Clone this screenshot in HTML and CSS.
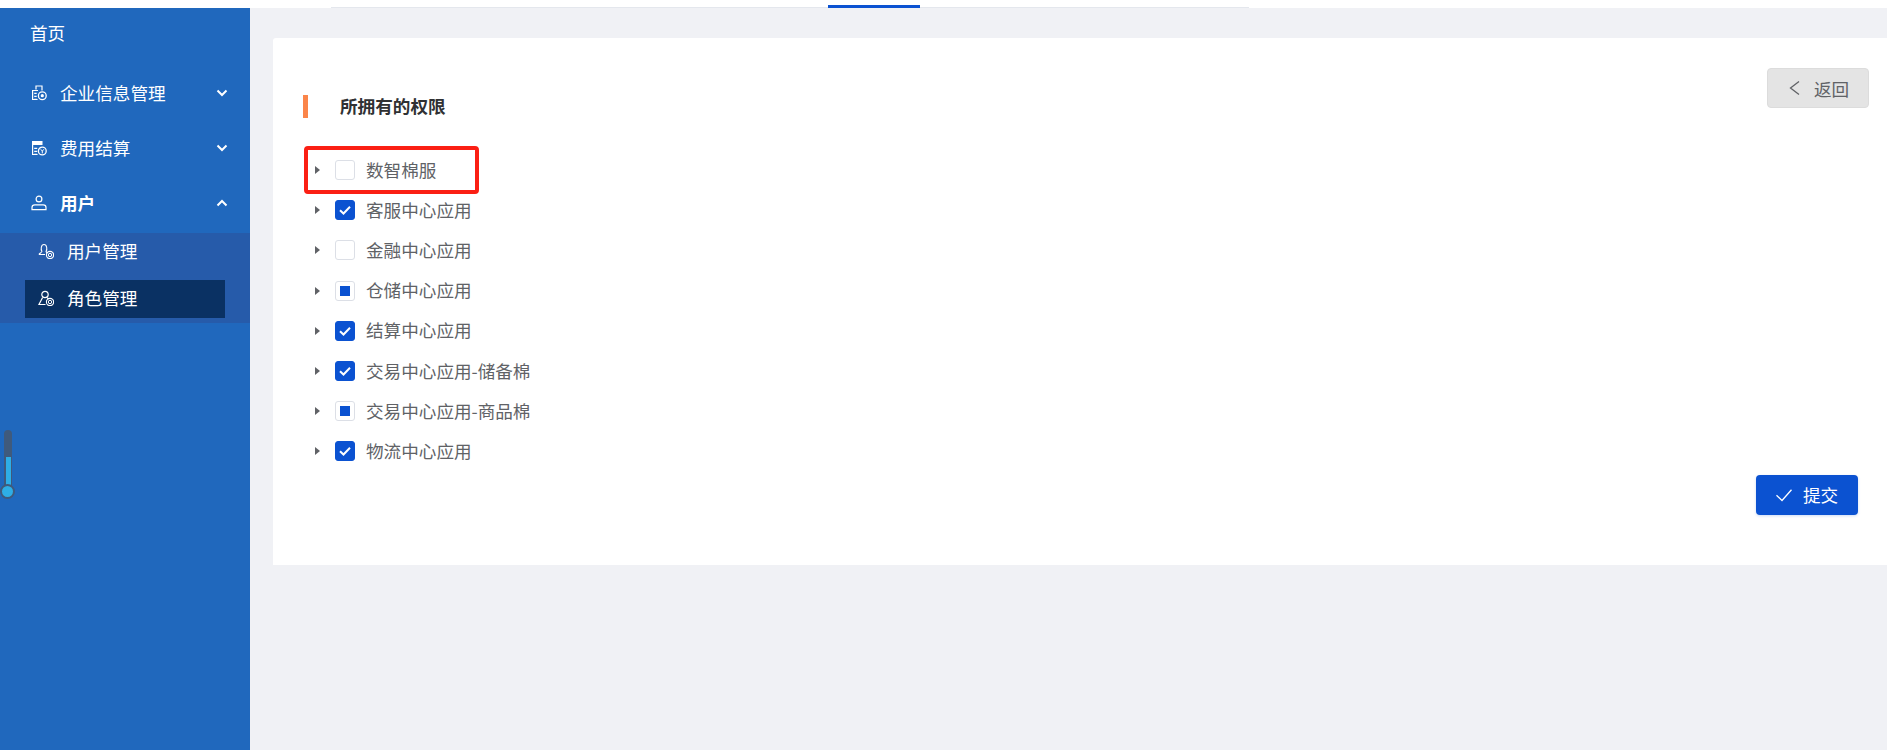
FILE: index.html
```html
<!DOCTYPE html>
<html lang="zh-CN">
<head>
  <meta charset="UTF-8">
  <title>角色管理</title>
  <link rel="stylesheet" href="styles.css">
</head>
<body>
  <!-- top tab strip -->
  <div class="topbar">
    <div class="tab-line">
      <span class="tab-active"></span>
    </div>
  </div>

  <div class="main">
    <aside class="sidebar">
      <a class="home-link">首页</a>

      <div class="menu-item">
        <svg class="menu-icon" viewBox="0 0 16 16"><path d="M5 4.500V1h6v4.500M1 5.500h6M1.600 5.500v9h5M3.200 8.300h2.500M3.200 11.300h2.500M3.200 14.300h2.500" fill="none" stroke="#fff" stroke-width="1.200"/><circle cx="11.300" cy="10.700" r="3.900" fill="none" stroke="#fff" stroke-width="1.300"/><circle cx="11.300" cy="10.700" r="1.600" fill="#fff"/></svg>
        <span class="menu-label">企业信息管理</span>
        <svg class="menu-arrow" viewBox="0 0 12 8"><path d="M1.500 1.500 6 6l4.500-4.500" fill="none" stroke="#fff" stroke-width="2"/></svg>
      </div>

      <div class="menu-item">
        <svg class="menu-icon" viewBox="0 0 16 16"><path d="M1 1h10.500v4H1z" fill="#fff"/><path d="M1.600 5v9.500h5M3.200 8.300h3M3.200 11.300h3M3.200 14.300h3" fill="none" stroke="#fff" stroke-width="1.200"/><circle cx="11.300" cy="11" r="3.900" fill="none" stroke="#fff" stroke-width="1.300"/><path d="M9.800 9.300l1.500 1.800 1.500-1.800M11.300 11v2.400" fill="none" stroke="#fff"/></svg>
        <span class="menu-label">费用结算</span>
        <svg class="menu-arrow" viewBox="0 0 12 8"><path d="M1.500 1.500 6 6l4.500-4.500" fill="none" stroke="#fff" stroke-width="2"/></svg>
      </div>

      <div class="menu-item menu-open">
        <svg class="menu-icon" viewBox="0 0 16 16"><circle cx="8" cy="4" r="2.900" fill="none" stroke="#fff" stroke-width="1.200"/><path d="M1 14.600v-2.200c0-1.600 1.200-2.600 2.800-2.600h8.400c1.600 0 2.800 1 2.800 2.600v2.200z" fill="none" stroke="#fff" stroke-width="1.200"/></svg>
        <span class="menu-label">用户</span>
        <svg class="menu-arrow" viewBox="0 0 12 8"><path d="M1.500 6.500 6 2l4.500 4.500" fill="none" stroke="#fff" stroke-width="2"/></svg>
      </div>

      <div class="submenu">
        <div class="submenu-item">
          <svg class="sub-icon" viewBox="0 0 16 16"><path d="M1 11.500c0-1.300 2.600-1.700 2.900-3C2.600 6.500 3 1.500 6 1.500s3.400 5 2.100 7c.2.800 1 1.200 1.500 1.500M1 11.500h6" fill="none" stroke="#fff" stroke-width="1.100"/><circle cx="12" cy="12" r="3.600" fill="none" stroke="#fff" stroke-width="1.100"/><circle cx="12" cy="12" r="1.700" fill="none" stroke="#fff"/></svg>
          <span>用户管理</span>
        </div>
        <div class="submenu-item submenu-active">
          <svg class="sub-icon" viewBox="0 0 16 16"><circle cx="7" cy="4.500" r="3.200" fill="none" stroke="#fff" stroke-width="1.200"/><path d="M4.600 7.500 1 14.500h6.500M9.400 7.500l.9 1.800" fill="none" stroke="#fff" stroke-width="1.200"/><circle cx="12" cy="12" r="3.600" fill="none" stroke="#fff" stroke-width="1.100"/><circle cx="12" cy="12" r="1.700" fill="none" stroke="#fff"/></svg>
          <span>角色管理</span>
        </div>
      </div>

      <div class="thermo">
        <span class="thermo-fill"></span>
        <span class="thermo-bulb"></span>
      </div>
    </aside>

    <section class="content">
      <div class="card">
        <div class="card-head">
          <h2 class="card-title">所拥有的权限</h2>
          <button class="btn btn-back">
            <svg class="btn-icon" viewBox="0 0 16 16"><path d="M12 1.500 3.500 8l8.500 6.500" fill="none" stroke="#606266" stroke-width="1.300"/></svg>
            返回
          </button>
        </div>

        <ul class="tree">
          <li class="tree-row">
            <span class="caret"></span><span class="check"></span><span class="tree-label">数智棉服</span>
            <span class="mark-box"></span>
          </li>
          <li class="tree-row">
            <span class="caret"></span>
            <span class="check is-checked"><svg viewBox="0 0 20 20"><path d="M5 10.200l3.500 3.300L15 6.800" fill="none" stroke="#fff" stroke-width="2"/></svg></span>
            <span class="tree-label">客服中心应用</span>
          </li>
          <li class="tree-row">
            <span class="caret"></span><span class="check"></span><span class="tree-label">金融中心应用</span>
          </li>
          <li class="tree-row">
            <span class="caret"></span><span class="check is-half"></span><span class="tree-label">仓储中心应用</span>
          </li>
          <li class="tree-row">
            <span class="caret"></span>
            <span class="check is-checked"><svg viewBox="0 0 20 20"><path d="M5 10.200l3.500 3.300L15 6.800" fill="none" stroke="#fff" stroke-width="2"/></svg></span>
            <span class="tree-label">结算中心应用</span>
          </li>
          <li class="tree-row">
            <span class="caret"></span>
            <span class="check is-checked"><svg viewBox="0 0 20 20"><path d="M5 10.200l3.500 3.300L15 6.800" fill="none" stroke="#fff" stroke-width="2"/></svg></span>
            <span class="tree-label">交易中心应用-储备棉</span>
          </li>
          <li class="tree-row">
            <span class="caret"></span><span class="check is-half"></span><span class="tree-label">交易中心应用-商品棉</span>
          </li>
          <li class="tree-row">
            <span class="caret"></span>
            <span class="check is-checked"><svg viewBox="0 0 20 20"><path d="M5 10.200l3.500 3.300L15 6.800" fill="none" stroke="#fff" stroke-width="2"/></svg></span>
            <span class="tree-label">物流中心应用</span>
          </li>
        </ul>

        <div class="card-foot">
          <button class="btn btn-submit">
            <svg class="btn-icon" viewBox="0 0 16 16"><path d="M.500 8.200 6 13.500 15.500 2.800" fill="none" stroke="#fff" stroke-width="1.300"/></svg>
            提交
          </button>
        </div>
      </div>
    </section>
  </div>
</body>
</html>
```

FILE: styles.css
```css
* {
  margin: 0;
  padding: 0;
  box-sizing: border-box;
}

html, body {
  height: 750px;
  overflow: hidden;
}

body {
  font-family: "Noto Sans CJK SC", "Liberation Sans", sans-serif;
  font-size: 17.6px;
  background: #fff;
  color: #606266;
}

.topbar {
  height: 8px;
  padding-left: 331px;
  background: #fff;
}

.tab-line {
  display: flex;
  justify-content: flex-start;
  align-items: flex-end;
  width: 918px;
  height: 8px;
  border-bottom: 1px solid #e4e7ed;
}

.tab-active {
  width: 92px;
  height: 3px;
  margin-left: 497px;
  margin-bottom: -1px;
  background: #0b52d1;
}

.main {
  display: flex;
  height: 742px;
  background: #f0f1f5;
}

.sidebar {
  position: relative;
  flex: 0 0 250px;
  background: #2068bd;
  color: #fff;
}

.home-link {
  display: block;
  height: 57px;
  padding: 11px 0 0 30px;
  line-height: 28px;
  color: #fff;
}

.menu-item {
  display: flex;
  align-items: center;
  height: 55px;
  padding: 0 22px 0 31px;
}

.menu-icon {
  width: 16px;
  height: 16px;
  margin-right: 13px;
}

.menu-label {
  flex: 1;
}

.menu-open .menu-label {
  font-weight: 700;
}

.menu-arrow {
  width: 12px;
  height: 8px;
}

.submenu {
  height: 90px;
  margin-top: 3px;
  padding: 0 25px;
  background: #265baa;
}

.submenu-item {
  display: flex;
  align-items: center;
  height: 38px;
  margin-bottom: 9px;
  padding-left: 13px;
  padding-bottom: 3px;
}

.submenu-active {
  background: #0a3163;
}

.sub-icon {
  width: 16px;
  height: 16px;
  margin-right: 13px;
}

/* small thermometer on the edge */
.thermo {
  position: absolute;
  left: 4px;
  top: 422px;
  width: 8px;
  height: 62px;
  border-radius: 4px 4px 0 0;
  background: #3f5a7c;
}

.thermo-fill {
  position: absolute;
  left: 1.500px;
  top: 27px;
  width: 5px;
  height: 35px;
  background: #2eaee6;
}

.thermo-bulb {
  position: absolute;
  left: -4px;
  top: 54px;
  width: 15px;
  height: 15px;
  border: 2px solid #3f5a7c;
  border-radius: 50%;
  background: #2eaee6;
}

.content {
  flex: 1;
  padding: 30px 0 0 23px;
}

.card {
  height: 527px;
  padding: 30px 18px 0 30px;
  border-radius: 3px 0 0 0;
  background: #fff;
}

.card-head {
  display: flex;
  justify-content: space-between;
  align-items: flex-start;
  height: 81px;
}

.card-title {
  height: 23px;
  margin-top: 27px;
  padding-left: 32px;
  border-left: 5px solid #fb8549;
  font-size: 17.6px;
  font-weight: 700;
  line-height: 22px;
  color: #303133;
}

.btn {
  display: flex;
  align-items: center;
  justify-content: center;
  width: 102px;
  height: 40px;
  border-radius: 4px;
  font-family: inherit;
  font-size: 17.6px;
}

.btn-icon {
  width: 16px;
  height: 16px;
  margin-right: 11px;
}

.btn-back {
  border: 1px solid #dcdcdc;
  background: #e4e4e4;
  color: #606266;
}

.btn-submit {
  margin-right: 11px;
  border: none;
  background: #0b52d1;
  color: #fff;
  box-shadow: 0 1px 3px rgba(11, 82, 209, 0.2);
}

.tree {
  list-style: none;
}

.tree-row {
  position: relative;
  display: flex;
  align-items: center;
  height: 40.2px;
  padding-left: 12px;
}

.caret {
  width: 0;
  height: 0;
  margin-top: 2px;
  margin-right: 15px;
  border-left: 5px solid #606266;
  border-top: 4.5px solid transparent;
  border-bottom: 4.5px solid transparent;
}

.check {
  display: flex;
  align-items: center;
  justify-content: center;
  width: 20px;
  height: 20px;
  margin-top: 2px;
  margin-right: 11px;
  border: 1px solid #dcdfe6;
  border-radius: 3px;
  background: #fff;
}

.check svg {
  width: 20px;
  height: 20px;
  flex: none;
}

.is-checked {
  border-color: #0b52d1;
  background: #0b52d1;
}

.is-half::after {
  content: "";
  width: 10px;
  height: 10px;
  background: #0b52d1;
}

/* red annotation round the first row */
.mark-box {
  position: absolute;
  left: 1px;
  top: -3px;
  width: 175px;
  height: 48px;
  border: 4px solid #fb1f14;
  border-radius: 4px;
}

.card-foot {
  display: flex;
  justify-content: flex-end;
  margin-top: 4px;
}
```
